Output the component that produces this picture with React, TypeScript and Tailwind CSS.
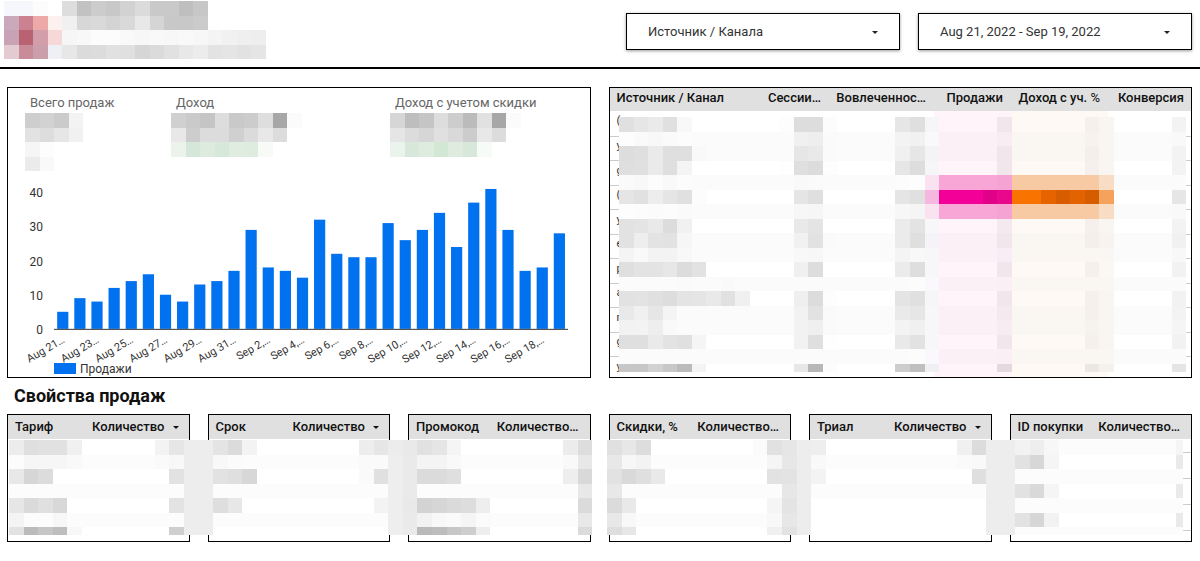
import { ReactNode } from "react";

const sales = [
  5, 9, 8, 12, 14, 16, 10, 8, 13, 14, 17, 29, 18, 17, 15,
  32, 22, 21, 21, 31, 26, 29, 34, 24, 37, 41, 29, 17, 18, 28,
];

const dateLabels = [
  "Aug 21…", "Aug 23…", "Aug 25…", "Aug 27…", "Aug 29…", "Aug 31…", "Sep 2,…", "Sep 4,…",
  "Sep 6,…", "Sep 8,…", "Sep 10,…", "Sep 12,…", "Sep 14,…", "Sep 16,…", "Sep 18,…",
];

// Hidden values are drawn as mosaics: each token is a grey level or a full colour, "*n" repeats it
const brandMosaic = [
  "f6f7fc*2 fc ff dd c2 cc c8 d2 db c9 c9 bf c7 ff*4",
  "c9a9bb cc8190 eda9a8 fdf1ef f0 d7 d9 d4 d9 e8 d5 c8 c8 cb ff*4",
  "c7a3b5 b96372 d29eaa f6d8d8 f6 f8 fc fc f9 f7 f9 f7 f9 f7 f4 f1 ef ee",
  "e4cbd1 c98b98 cb9eac efeff6 e7 db dc e1 e0 d6 db e1 e8 ec e3 e5 e2 e5",
];

const metrics = [
  {
    title: "Всего продаж",
    mosaic: ["ce d2 cb f3", "e2 dd e6 f1", "f6 fd ff ff", "eb f9 ff ff"],
  },
  {
    title: "Доход",
    mosaic: [
      "d0 ca c5 dd c9 cc de a7 fb",
      "e8 cd dc dc d0 db e8 dc ff",
      "ebf3eb d5e7d8 dcebde d6e8d9 dfecdf deebdf f7faf7 ff ff",
      "ff*9",
    ],
  },
  {
    title: "Доход с учетом скидки",
    mosaic: [
      "d6 be c5 dd cd bb e1 a7 fb",
      "e5 dc d6 e0 d9 cc e8 dc ff",
      "ebf4ec d7e8da deecdf d3e8d4 dfebdf d7e8da f7fbf8 ff ff",
      "ff*9",
    ],
  },
];

const sourcesMosaic = [
  "e0 e6 ea e0 f8 ff*6 fd dd dd fc ff*4 e6 df f6f5f7 fef4fa*4 f2e6ed fef9f4*5 f5f0ec f9f5f1 ff*4 f3",
  "fd fa f8 fa fc fb*7 f0 ee fa fb*4 f3 f1 f9f8fb faf0f6*4 f7edf3 faf6f2*5 f7f2ee f9f5f1 fb*4 f9",
  "dd df ea df df f9 fb*6 e6 e9 fa fb*4 f0 e6 f4f3f5 faf0f6*4 f2e6ed faf6f2*5 f4efeb f9f5f1 fb*4 f3",
  "df e0 ea df f4 ff*6 fe df dc fd ff*4 e6 dd f6f5f7 fef4fa*4 f2e6ed fef9f4*5 f5f0ec f9f5f1 ff*4 f3",
  "fa f8 fc f9 fc fb*7 f9 fa fb*5 fc fd fae2f1 f7a6d6*4 f4a3d2 f8caa4*6 f8dcc4 fb*5",
  "e5 e1 ed e5 e0 fc ff*6 e5 df ff*5 e5 e0 f5b6df f20097*3 e00089 e9078c f97300*2 e56400 d75d00 e26300 d65c00 f5a25c ff*4 e6",
  "fd fc fb fc fa fb*7 f7 f6 fb*5 f7 f5 fae2f1 f7a6d6*4 f4a3d2 f8caa4*6 f8dcc4 fb*4 f9",
  "e2 e4 e9 dc f1 ff*7 e9 e4 ff*5 eb e3 f7f6f8 fef4fa*4 f4e9ef fef9f4*5 f5f0ec f9f5f1 ff*4 f3",
  "e2 ee e3 e2 f6 fb*7 f1 e2 fa fb*4 eb df f5f3f7 faf0f6*4 f2e6ed faf6f2*5 f4efeb f8f3ef fb*4 f1",
  "f4 f9 f3 f3 f8 fb*7 f8 f7 fb*5 f4 f8 f7f6f9 faf0f6*4 f9edf5 faf6f2*6 f9f6f3 fb*4 f8",
  "df e3 e3 e7 dc e2 ff*6 f0 dd ff*5 eb de f7f6f8 fef4fa*4 f2e6ed fef9f4*5 f5f0ec fbf7f3 ff*4 f2",
  "fb*4 fa fb fb f9 fb*11 fb fc faf8fd faf0f6*4 f9eff5 faf6f2*7 fb*5",
  "e2 e3 e0 dd e4 e5 e9 e1 f0 ff*3 ef dc fd ff*4 e4 e0 f6f5f7 fef4fa*4 f2e6ed fef9f4*5 f5f0ec f9f5f1 ff*4 f2",
  "e9 f0 e6 f4 fb*8 f2 e2 fa fb*4 ea e6 f7f6f9 faf0f6*4 f3e9ef faf6f2*5 f5f0ec f9f5f1 fb*4 f3",
  "f2 f3 ee f9 fb*8 f2 ef fa fb*4 f3 f0 f7f6f9 faf0f6*4 f6ecf2 faf6f2*5 f6f2ee f9f5f1 fb*4 f5",
  "df df ea e3 e0 f5 ff*6 f2 df fe ff*4 e9 e2 f7f6f8 fef4fa*4 f2e6ed fef9f4*5 f5f0ec f9f5f1 ff*4 f2",
  "fb*19 fb fc faf8fd faf0f6*4 f9eff5 faf6f2*7 fb*5",
  "c7 c6 d1 c8 bb f4 ff*6 e7 b7 fc ff*4 cd bf f0eff1 fef4fa*4 e3d9de fef9f4*5 ebe7e2 f5f1ed ff*4 e5",
];

const propertiesMosaic = [
  "ec df e1 e1 f0 ff*5 f3 e6 ed*2 e4 db f3 ff*7 ed e6 ec e9 e1 e5 f5 ff*7 ec dd ff e0 e7 dd ff*7 fb e1 e6 ed ee ff*9 f0 dc ed ed f2 ee f7 fc*8 f5",
  "fc f6*3 f9 fc*5 fa f8 ed*2 f8 fb fc fc*7 fa fa ee ea f4 f4 f9 fc*7 f9 e8 ff e8 f7 f3 fc*8 f5 e7 ed f9 fc*9 fa f9 ed ed e2 d7 f5 ff*8 ea",
  "e8 d6 dc ff*8 e2 ed*2 e2 df d7 ff*7 fa e0 ee ea db db df ff*7 ee d9 ff e2 d9 df e9 ff*7 e2 e3 ed f3 ff*10 df ed ed fc*12",
  "fc*12 ed*2 fc*12 ee ea fc*11 e8 ff e8 fc*11 e7 ed fc*12 ed ed e2 d9 f5 ff*8 ea",
  "e6 da e0 d8 ff*7 e3 ed*2 de e7 ff*9 f3 ee e9 d3 d6 da dd ee ff*6 db ff db e9 ff*9 f5 e4 ed ff*12 ed ed fc*12",
  "f4 fc fc f7 fc*8 ed*2 fc*12 ee ea f2 f8 fa f5 fb fc*6 e8 ff e8 f8 fc*9 f8 e7 ed ff*12 ed ed e2 d6 f2 ff*8 ea",
  "e2 bb c6 be f8 ff*6 cf ed*2 ff*12 ee ea ba bd c7 ce ee ff*6 db ff de e7 ff*9 f0 e2 ed ff*12 ed ed fc*12",
];

const propertyTables = [
  { name: "Тариф", value: "Количество", sorted: true },
  { name: "Срок", value: "Количество", sorted: true },
  { name: "Промокод", value: "Количество…" },
  { name: "Скидки, %", value: "Количество…" },
  { name: "Триал", value: "Количество", sorted: true },
  { name: "ID покупки", value: "Количество…", rows: 5 },
];

const sources = ["(", "y", "g", "(", "y", "e", "p", "a", "r", "g", "y"];

function parseRow(row: string) {
  return row.split(" ").flatMap((token) => {
    const [value, count] = token.split("*");
    const color = value.length === 2 ? `#${value}${value}${value}` : `#${value}`;
    return Array<string>(Number(count ?? 1)).fill(color);
  });
}

type MosaicProps = { rows: string[]; cols: number; lines: number; className: string };

function Mosaic({ rows, cols, lines, className }: MosaicProps) {
  return (
    <svg
      className={className}
      viewBox={`0 0 ${cols} ${lines}`}
      preserveAspectRatio="none"
      shapeRendering="crispEdges"
      aria-hidden="true"
    >
      {rows.map((row, y) =>
        parseRow(row).map((color, x) => (
          <rect key={`${x}-${y}`} x={x} y={y} width={1} height={1} fill={color} />
        ))
      )}
    </svg>
  );
}

function Caret({ className }: { className: string }) {
  return (
    <svg className={className} viewBox="0 0 6 3" width="6" height="3" aria-hidden="true">
      <path d="M0 0h6L3 3z" fill="currentColor" />
    </svg>
  );
}

function Filter({ label, children }: { label: string; children: ReactNode }) {
  return (
    <div className="relative w-[274px]">
      <select
        aria-label={label}
        className="h-[37px] w-full appearance-none border border-black bg-white pr-8 pl-[21px] text-[13px] text-[#333] shadow-[0_1px_3px_rgba(0,0,0,0.4)]"
      >
        {children}
      </select>
      <Caret className="pointer-events-none absolute top-[18px] right-[22px] text-[#222]" />
    </div>
  );
}

function SalesChart() {
  const baseline = 158;
  const scale = 3.415;
  const step = 17.14;

  return (
    <svg viewBox="0 0 582 190" className="block w-full overflow-visible" role="img" aria-label="Продажи">
      {[0, 10, 20, 30, 40].map((tick) => (
        <text key={tick} x="35" y={baseline + 5 - tick * scale} textAnchor="end" fontSize="12" fill="#333">
          {tick}
        </text>
      ))}
      {sales.map((value, i) => (
        <rect
          key={i}
          x={49.2 + i * step}
          y={baseline - value * scale}
          width="11.2"
          height={value * scale}
          fill="#0072f0"
        />
      ))}
      <path d="M46 158.5h514.5" stroke="#333" />
      {dateLabels.map((label, i) => {
        const x = 57.5 + i * step * 2;
        return (
          <text
            key={label}
            x={x}
            y="171"
            textAnchor="end"
            fontSize="11"
            fill="#333"
            transform={`rotate(-30 ${x} 171)`}
          >
            {label}
          </text>
        );
      })}
    </svg>
  );
}

function SourcesTable() {
  return (
    <section className="relative h-[291px] overflow-hidden border border-black">
      <table className="w-full table-fixed border-collapse">
        <colgroup>
          <col />
          <col className="w-[80px]" />
          <col className="w-[105px]" />
          <col className="w-[77px] bg-[#fef4fa]" />
          <col className="w-[97px] bg-[#fff9f4]" />
          <col className="w-[83px]" />
        </colgroup>
        <thead className="bg-[#e0e0e0] text-right text-[13px] leading-4 whitespace-nowrap text-[#111]">
          <tr className="h-[23px]">
            <th className="pb-[3px] pl-[7px] text-left font-medium">Источник / Канал</th>
            <th className="pr-2 pb-[3px] font-medium">Сессии…</th>
            <th className="pr-2 pb-[3px] font-medium">Вовлеченнос…</th>
            <th className="pr-2 pb-[3px] font-medium">Продажи</th>
            <th className="pr-2 pb-[3px] font-medium">Доход с уч. <span className="font-normal">%</span></th>
            <th className="pr-[7px] pb-[3px] font-medium">Конверсия</th>
          </tr>
        </thead>
        <tbody className="text-[11px] text-[#333]">
          {sources.map((source, i) => (
            <tr key={i} className="h-[25px] border-b border-[#ccc] even:h-6">
              <td className="pb-1 pl-[7px] leading-4">{source}</td>
              <td />
              <td />
              <td />
              <td />
              <td />
            </tr>
          ))}
        </tbody>
      </table>
      <Mosaic
        rows={sourcesMosaic}
        cols={39}
        lines={17.55}
        className="absolute top-[29px] left-[9px] h-[255px] w-[calc(100%-14px)]"
      />
    </section>
  );
}

function PropertyTable({ name, value, sorted, rows = 0 }: { name: string; value: string; sorted?: boolean; rows?: number }) {
  return (
    <section className="h-32 overflow-hidden border border-black">
      <table className="w-full border-collapse">
        <thead className="bg-[#e0e0e0] text-[13px] leading-4 whitespace-nowrap text-[#111]">
          <tr className="h-6">
            <th className="pl-[7px] text-left font-medium">{name}</th>
            <th className={sorted ? "pr-[10px] text-right font-medium" : "pr-[11px] text-right font-medium"}>
              {value}
              {sorted && <Caret className="ml-2 inline-block align-middle" />}
            </th>
          </tr>
        </thead>
        <tbody>
          {Array.from({ length: rows }, (_, i) => (
            <tr key={i} className="h-[26px] border-b border-[#ccc] first:h-[13px]">
              <td />
              <td />
            </tr>
          ))}
        </tbody>
      </table>
    </section>
  );
}

export default function App() {
  return (
    <div className="bg-white font-[Roboto,'Liberation_Sans',sans-serif]">
      <header className="flex h-[69px] justify-between border-b-2 border-black pr-2 pl-1">
        <Mosaic rows={brandMosaic} cols={18} lines={4} className="mt-px h-[58px] w-[262px]" />
        <div className="flex gap-[18px] pt-[13px]">
          <Filter label="Источник">
            <option>Источник / Канала</option>
          </Filter>
          <Filter label="Период">
            <option>Aug 21, 2022 - Sep 19, 2022</option>
          </Filter>
        </div>
      </header>

      <main className="pt-[18px] pr-2 pl-[7px]">
        <div className="grid grid-cols-2 gap-[18px]">
          <section className="h-[291px] border border-black pt-[7px]">
            <div className="grid grid-cols-[146px_219px_1fr] pl-[17px]">
              {metrics.map(({ title, mosaic }, i) => (
                <div key={title}>
                  <h3 className="pl-[5px] text-[13px] leading-4 text-[#666]">{title}</h3>
                  <Mosaic
                    rows={mosaic}
                    cols={i === 0 ? 4 : 9}
                    lines={4}
                    className={i === 0 ? "mt-0.5 h-[58px] w-[58px]" : "mt-0.5 h-[58px] w-[131px]"}
                  />
                </div>
              ))}
            </div>
            <SalesChart />
            <div className="flex h-4 items-center gap-1 pl-[46px] text-[12px] text-[#333]">
              <span className="h-[11px] w-[22px] bg-[#0072f0]" />
              Продажи
            </div>
          </section>
          <SourcesTable />
        </div>

        <h2 className="pl-[7px] text-[18px] leading-9 font-bold text-[#111]">Свойства продаж</h2>

        <div className="relative grid grid-cols-6 gap-[18px]">
          {propertyTables.map((table) => (
            <PropertyTable key={table.name} {...table} />
          ))}
          <Mosaic
            rows={propertiesMosaic}
            cols={80.5}
            lines={6.55}
            className="absolute top-[26px] left-[2px] h-[95px] w-[calc(100%-11px)]"
          />
        </div>
      </main>
    </div>
  );
}
